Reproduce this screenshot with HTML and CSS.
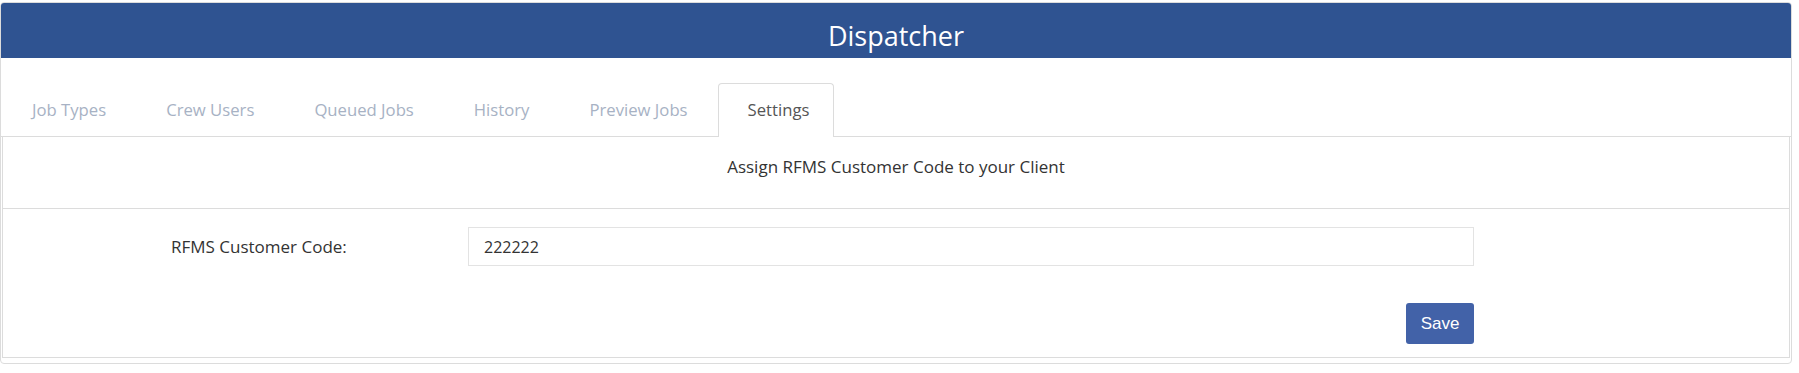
FILE: index.html
```html
<!DOCTYPE html>
<html>
<head>
<meta charset="utf-8">
<link rel="stylesheet" href="styles.css">
</head>
<body>
<div class="page">
  <div class="card">
    <div class="header">Dispatcher</div>
    <div class="tabs">
      <div class="tab">Job Types</div>
      <div class="tab">Crew Users</div>
      <div class="tab">Queued Jobs</div>
      <div class="tab">History</div>
      <div class="tab">Preview Jobs</div>
      <div class="tab active">Settings</div>
    </div>
    <div class="panel">
      <div class="section-title">Assign RFMS Customer Code to your Client</div>
      <div class="form-row">
        <label class="label">RFMS Customer Code:</label>
        <input class="input" type="text" value="222222">
      </div>
      <div class="actions">
        <button class="btn">Save</button>
      </div>
    </div>
  </div>
</div>
</body>
</html>
```
FILE: styles.css
```css
html, body { margin: 0; padding: 0; background: #fff; }
body { font-family: "Open Sans", "Noto Sans", sans-serif; font-size: 17px; color: #333; }
.page { padding: 2px 7px 0 0; }
.card { border: 1px solid #dcdcdc; border-radius: 4px; overflow: hidden; }
.header {
  background: #2f5391;
  height: 55px;
  box-sizing: border-box;
  padding-top: 9px;
  color: #fff;
  font-size: 27px;
  display: flex;
  align-items: center;
  justify-content: center;
}
.tabs {
  display: flex;
  padding: 25px 0 0 1px;
  border-bottom: 1px solid #dcdcdc;
}
.tab {
  padding: 15px 29px;
  line-height: 22px;
  font-size: 16.7px;
  color: #a7b2c4;
  border: 1px solid transparent;
  border-bottom: none;
}
.tab.active {
  color: #555;
  border-color: #dcdcdc;
  border-radius: 4px 4px 0 0;
  background: #fff;
  margin-bottom: -1px;
  padding-bottom: 16px;
  padding-right: 24px;
}
.panel {
  border: 1px solid #dcdcdc;
  border-top: none;
  margin: 0 1px 5px 1px;
}
.section-title {
  padding: 19px 0 30px;
  line-height: 22px;
  text-align: center;
  border-bottom: 1px solid #dcdcdc;
}
.form-row {
  display: flex;
  align-items: center;
  margin-top: 18px;
}
.label {
  flex: 0 0 auto;
  width: 465px;
  padding-left: 168px;
  box-sizing: border-box;
  white-space: nowrap;
}
.input {
  flex: 0 0 auto;
  width: 1006px;
  height: 39px;
  box-sizing: border-box;
  border: 1px solid #e3e3e3;
  border-radius: 0;
  padding: 0 15px;
  font-family: "Open Sans", "Noto Sans", sans-serif;
  font-size: 16px;
  color: #333;
  outline: none;
}
.actions {
  display: flex;
  justify-content: flex-end;
  width: 1471px;
  margin-top: 37px;
  padding-bottom: 13px;
}
.btn {
  background: #4262a8;
  color: #fff;
  border: none;
  border-radius: 3px;
  width: 68px;
  height: 41px;
  font-family: "Liberation Sans", Arial, sans-serif;
  font-size: 17px;
  padding: 0;
}
```
